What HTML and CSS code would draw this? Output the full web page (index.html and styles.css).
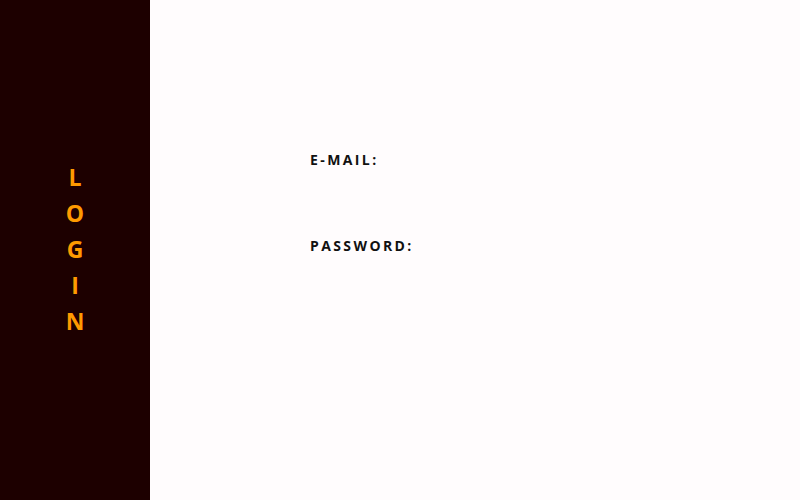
FILE: index.html
```html
<!DOCTYPE html>
<html>
<head>
<meta charset="utf-8">
<link rel="stylesheet" href="styles.css">
</head>
<body>
<div class="page">
  <aside class="side">
    <div class="title"><span>L</span><span>O</span><span>G</span><span>I</span><span>N</span></div>
  </aside>
  <main class="main">
    <form class="form">
      <label class="field"><span class="lbl">E-MAIL:</span><input class="inp" type="email"></label>
      <label class="field"><span class="lbl">PASSWORD:</span><input class="inp" type="password"></label>
    </form>
  </main>
</div>
</body>
</html>
```
FILE: styles.css
```css
* { box-sizing: border-box; }
html, body { margin: 0; padding: 0; height: 100%; }
body { font-family: "Open Sans", "DejaVu Sans", sans-serif; background: #fffcfd; }
.page { display: flex; height: 500px; }
.side { width: 150px; background: #1d0000; display: flex; align-items: center; justify-content: center; }
.title { display: flex; flex-direction: column; align-items: center; color: #ff9a00; font-weight: 700; font-size: 23px; line-height: 36px; margin-top: -3px; }
.main { flex: 1; padding: 150px 0 0 160px; }
.form { display: flex; flex-direction: column; gap: 40px; }
.field { display: flex; flex-direction: column; gap: 6px; }
.lbl { font-size: 14px; font-weight: 700; letter-spacing: 2.4px; color: #111; line-height: 20px; }
.inp { border: none; background: transparent; width: 300px; height: 20px; outline: none; padding: 0; }
```
